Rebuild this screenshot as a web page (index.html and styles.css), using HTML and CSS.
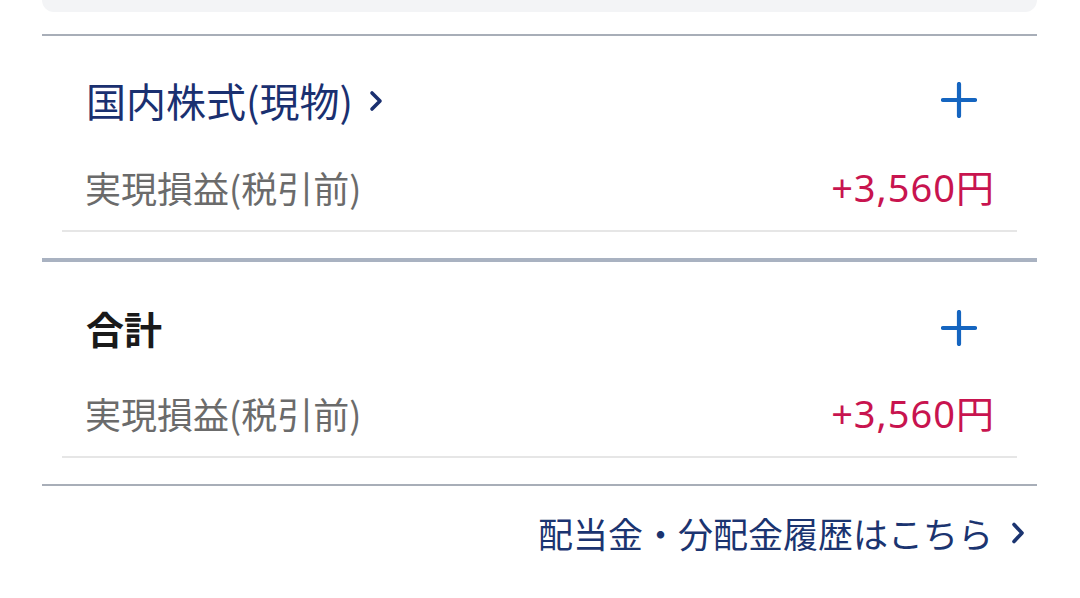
FILE: index.html
```html
<!DOCTYPE html>
<html lang="ja">
<head>
  <meta charset="UTF-8">
  <meta name="viewport" content="width=device-width, initial-scale=1.0">
  <title>実現損益</title>
  <link rel="stylesheet" href="styles.css">
</head>
<body>
  <div class="page">
    <div class="summary-card"></div>

    <div class="section">
      <div class="section-head">
        <a class="section-title link" href="#">国内株式(現物)
          <svg class="chevron" width="14" height="22" viewBox="0 0 14 22"><path d="M3 3l8 8-8 8" fill="none" stroke="currentColor" stroke-width="3.6" stroke-linecap="round" stroke-linejoin="round"/></svg>
        </a>
        <svg class="plus" width="36" height="36" viewBox="0 0 36 36"><path d="M18 2v32M2 18h32" stroke="currentColor" stroke-width="4.2" stroke-linecap="round"/></svg>
      </div>
      <div class="pl-row">
        <span class="pl-label">実現損益(税引前)</span>
        <span class="pl-value">+3,560円</span>
      </div>
    </div>

    <div class="section total">
      <div class="section-head">
        <span class="section-title strong">合計</span>
        <svg class="plus" width="36" height="36" viewBox="0 0 36 36"><path d="M18 2v32M2 18h32" stroke="currentColor" stroke-width="4.2" stroke-linecap="round"/></svg>
      </div>
      <div class="pl-row">
        <span class="pl-label">実現損益(税引前)</span>
        <span class="pl-value">+3,560円</span>
      </div>
    </div>

    <div class="footer">
      <a class="history-link" href="#">配当金・分配金履歴はこちら
        <svg class="chevron" width="14" height="24" viewBox="0 0 14 24"><path d="M3 3.5l8 8.5-8 8.5" fill="none" stroke="currentColor" stroke-width="3.6" stroke-linecap="round" stroke-linejoin="round"/></svg>
      </a>
    </div>
  </div>
</body>
</html>
```

FILE: styles.css
```css
body {
  margin: 0;
  background: #ffffff;
  font-family: "Noto Sans CJK JP", "Noto Sans", sans-serif;
}
.page {
  padding: 0 43px 0 42px;
}
.summary-card {
  height: 12px;
  background: #f3f4f6;
  border-radius: 0 0 14px 14px;
  margin-bottom: 22px;
}
.section {
  border-top: 2px solid #a8aeb8;
}
.section.total {
  border-top: 4px solid #a9b2c1;
  margin-top: 26px;
}
.section-head {
  display: flex;
  justify-content: space-between;
  align-items: center;
  padding: 42px 60px 0 44px;
  height: 44px;
}
.total .section-head {
  padding-top: 44px;
}
.section-title {
  font-size: 40px;
  line-height: 44px;
  color: #1a3070;
  text-decoration: none;
  display: flex;
  align-items: center;
}
.section-title.strong {
  color: #1a1a1a;
  font-weight: 700;
  font-size: 38px;
}
.section-title .chevron {
  margin-left: 16px;
  margin-top: 2px;
}
.plus {
  color: #1565c0;
}
.pl-row {
  display: flex;
  justify-content: space-between;
  align-items: center;
  margin: 0 20px;
  padding: 43px 22px 21px 23px;
  border-bottom: 2px solid #e6e6e6;
}
.total .pl-row {
  padding-top: 41px;
}
.pl-label {
  font-size: 36px;
  line-height: 44px;
  color: #6b6b6b;
}
.pl-value {
  font-family: "Noto Sans", "Noto Sans CJK JP", sans-serif;
  font-size: 38px;
  line-height: 44px;
  letter-spacing: 1px;
  color: #c8144f;
}
.footer {
  margin-top: 26px;
  border-top: 2px solid #a8aeb8;
  padding: 25px 12px 0 0;
  display: flex;
  justify-content: flex-end;
}
.history-link {
  display: flex;
  align-items: center;
  font-size: 35px;
  line-height: 44px;
  color: #1b3470;
  text-decoration: none;
}
.history-link .chevron {
  margin-left: 18px;
}
```
